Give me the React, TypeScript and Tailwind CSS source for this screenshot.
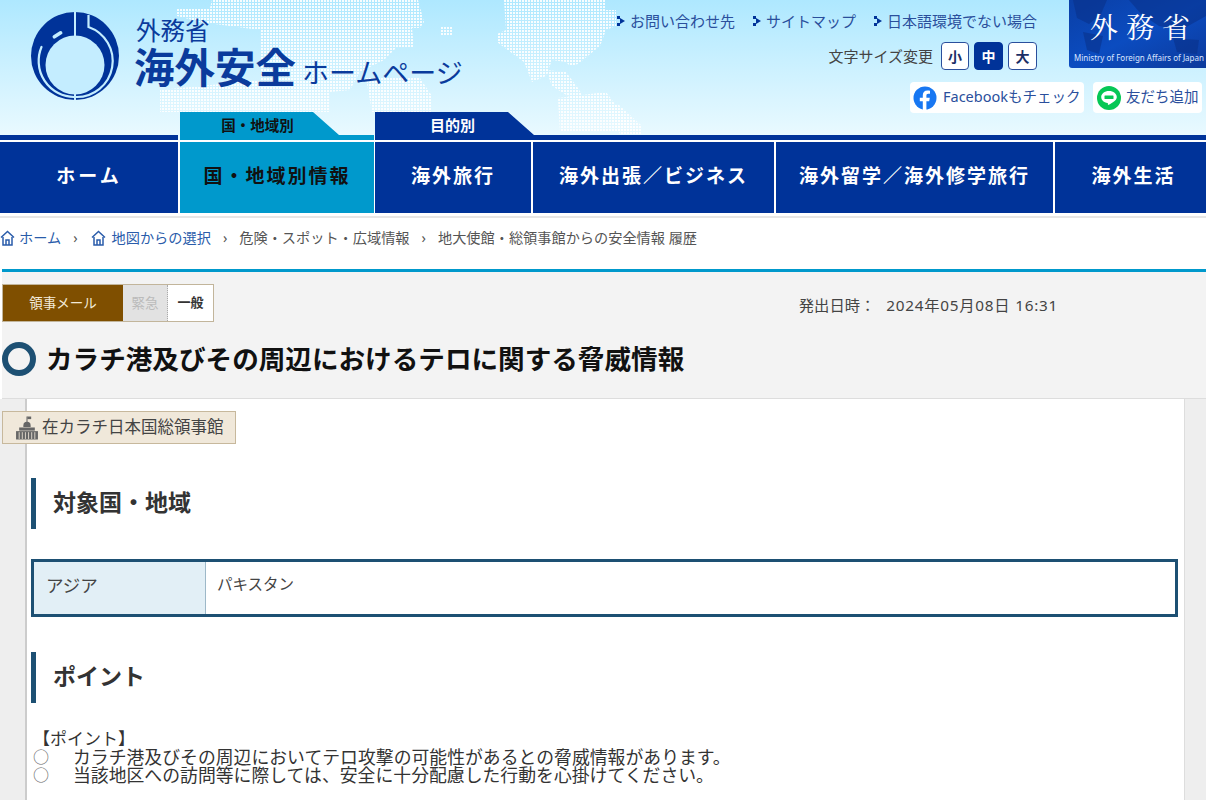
const fontStack = "font-['Noto_Sans','Noto_Sans_CJK_JP',sans-serif]";

function WorldDots() {
  return (
    <svg className="absolute left-0 top-0" width="700" height="135" aria-hidden="true">
      <defs>
        <pattern id="dots" width="3" height="3" patternUnits="userSpaceOnUse">
          <rect width="2" height="2" fill="#ffffff" fillOpacity="0.9" />
        </pattern>
      </defs>
      <g fill="url(#dots)">
        <path d="M177 8 L210 8 L212 0 L418 0 L424 22 L420 28 L412 28 L414 48 L396 48 L384 60 L360 72 L350 90 L330 92 L330 112 L160 112 L160 90 L260 80 L260 30 L200 22 L177 16 Z" />
        <path d="M366 78 L420 78 L432 96 L432 112 L372 112 Z" />
        <path d="M440 26 L452 26 L452 36 L440 36 Z" />
        <path d="M504 0 L606 0 L606 10 L616 10 L616 26 L606 30 L600 46 L578 64 L570 66 L566 62 L552 60 L546 76 L532 82 L524 62 L497 42 L497 34 L506 30 Z" />
        <path d="M546 70 L566 72 L578 88 L584 98 L574 100 L552 86 Z" />
        <path d="M558 98 L606 92 L624 116 L640 132 L560 132 Z" />
        <path d="M602 104 L618 104 L642 126 L642 134 L620 134 Z" />
      </g>
    </svg>
  );
}

function BannerMap() {
  return (
    <svg className="absolute left-0 top-0" width="137" height="68" aria-hidden="true">
      <g fill="#0a2f86" fillOpacity="0.55">
        <path d="M4 0 H38 L32 14 L20 24 L8 18 Z" />
        <path d="M60 0 H137 V16 L112 30 L90 26 L72 14 Z" />
        <path d="M14 32 L34 36 L30 54 L18 50 Z" />
        <path d="M104 38 L130 40 L128 54 L108 52 Z" />
      </g>
    </svg>
  );
}

function MofaLogo() {
  return (
    <svg width="88" height="88" viewBox="0 0 88 88" aria-label="海外安全ホームページ ロゴ">
      <circle cx="44" cy="44" r="44" fill="#003399" />
      <circle cx="44" cy="53" r="29.5" fill="#c4edff" />
      <path d="M57.5 3 V15 A36 36 0 0 1 45 85" fill="none" stroke="#c4edff" strokeWidth="2.2" />
      <path d="M10.5 35 A36 36 0 0 0 43 85" fill="none" stroke="#c4edff" strokeWidth="2.2" strokeLinecap="round" />
      <rect x="43" y="0" width="2" height="25" fill="#c4edff" />
      <rect x="43" y="80" width="2" height="8" fill="#c4edff" />
      <rect x="21" y="21" width="11" height="3.6" rx="1.8" fill="#c4edff" transform="rotate(-32 26.5 22.8)" />
    </svg>
  );
}

function Bullet() {
  return (
    <svg width="8" height="12" viewBox="0 0 8 12" className="mr-[5px] shrink-0" aria-hidden="true">
      <rect x="0" y="1" width="3" height="3" fill="#003399" />
      <rect x="0" y="8" width="3" height="3" fill="#003399" />
      <path d="M3 3 L8 6 L3 9 Z" fill="#003399" />
    </svg>
  );
}

function HomeIcon() {
  return (
    <svg width="15" height="16" viewBox="0 0 15 16" className="shrink-0" aria-hidden="true">
      <path d="M1 7.5 L7.5 1.5 L14 7.5" fill="none" stroke="#2a5caa" strokeWidth="1.5" />
      <path d="M3 7 V15 H12 V7 M6 15 V10 H9 V15" fill="none" stroke="#2a5caa" strokeWidth="1.5" />
    </svg>
  );
}

function FacebookIcon() {
  return (
    <svg width="24" height="24" viewBox="0 0 24 24" aria-hidden="true">
      <circle cx="12" cy="12" r="11.5" fill="#1877f2" />
      <path d="M13.4 24 V15.3 H16.2 L16.8 11.8 H13.4 V9.6 C13.4 8.6 13.9 7.8 15.3 7.8 H17 V4.8 C16.2 4.7 15.2 4.6 14.4 4.6 C11.6 4.6 9.8 6.3 9.8 9.2 V11.8 H6.8 V15.3 H9.8 V24 Z" fill="#ffffff" />
    </svg>
  );
}

function LineIcon() {
  return (
    <svg width="24" height="24" viewBox="0 0 24 24" aria-hidden="true">
      <circle cx="12" cy="12" r="12" fill="#06c755" />
      <path d="M12 5 C7.6 5 4.2 7.7 4.2 11.1 C4.2 14.1 6.9 16.6 10.5 17.1 C11.2 17.2 10.8 18.6 11 19 C11.4 19.3 16.6 16.2 18.4 14.3 C19.4 13.2 19.8 12.2 19.8 11.1 C19.8 7.7 16.4 5 12 5 Z" fill="#ffffff" />
      <rect x="7.5" y="9.6" width="9" height="3.4" rx="0.5" fill="#06c755" />
    </svg>
  );
}

function EmbassyIcon() {
  return (
    <svg width="22" height="24" viewBox="0 0 21 23" className="shrink-0" aria-hidden="true">
      <path d="M10.5 0.5 V7" stroke="#666" strokeWidth="1" />
      <path d="M10.8 0.5 H14.5 V3 H10.8 Z" fill="#666" />
      <path d="M7 9 A3.5 3.5 0 0 1 14 9 V10.5 H7 Z" fill="#666" />
      <path d="M3 11 H18 V14 H3 Z" fill="#666" />
      <path d="M0 14.5 H21 V22.5 H0 Z" fill="#666" />
      <path d="M3 15.5 V22 M6 15.5 V22 M9 15.5 V22 M12 15.5 V22 M15 15.5 V22 M18 15.5 V22" stroke="#f0e8da" strokeWidth="0.8" />
    </svg>
  );
}

function SectionTitle({ children }: { children: string }) {
  return (
    <h2 className="ml-[4px] flex h-[51px] items-center border-l-[5px] border-[#1d5073] pb-[3px] pl-[17px] text-[23px] font-bold text-[#333]">
      {children}
    </h2>
  );
}

const navItems = [
  { label: 'ホーム', width: 'w-[178px] tracking-[3px]', active: false },
  { label: '国・地域別情報', width: 'w-[194px]', active: true },
  { label: '海外旅行', width: 'w-[156px] -ml-[1px]', active: false },
  { label: '海外出張／ビジネス', width: 'w-[241px]', active: false },
  { label: '海外留学／海外修学旅行', width: 'w-[277px]', active: false },
  { label: '海外生活', width: 'flex-1 pl-[6px]', active: false },
];

export default function App() {
  return (
    <div className={`flex h-[800px] flex-col overflow-hidden bg-white text-[#333] ${fontStack}`}>
      {/* Header */}
      <header className="relative h-[140px] bg-gradient-to-b from-[#aee8ff] to-[#ebfaff]">
        <WorldDots />
        <div className="relative flex h-[112px] justify-between">
          <div className="flex pl-[31px] pt-[12px]">
            <MofaLogo />
            <div className="ml-[17px] text-[#0a3b9c]">
              <p className="mt-[5px] text-[24.5px] leading-[28px]">外務省</p>
              <p className="flex items-baseline whitespace-nowrap leading-[46px]">
                <span className="-ml-[2px] text-[40.5px] font-semibold">海外安全</span>
                <span className="ml-[6px] text-[27px]">ホームページ</span>
              </p>
            </div>
          </div>
          <div className="flex flex-col items-end">
            <div className="flex">
              <div className="flex flex-col items-end pt-[10px]">
                <ul className="flex gap-[18px] text-[15px] leading-[22px] text-[#2a4f9c]">
                  <li className="flex items-center"><Bullet />お問い合わせ先</li>
                  <li className="flex items-center"><Bullet />サイトマップ</li>
                  <li className="flex items-center"><Bullet />日本語環境でない場合</li>
                </ul>
                <div className="mt-[10px] flex items-center text-[15px]">
                  <span className="mr-[8px] text-[#444]">文字サイズ変更</span>
                  <div className="flex gap-[5px] text-[14px] font-bold">
                    <span className="flex h-[28px] w-[28px] items-center justify-center rounded-[4px] border border-[#2a4f9c] bg-white text-[#1a2f66]">小</span>
                    <span className="flex h-[28px] w-[29px] items-center justify-center rounded-[4px] border border-[#003399] bg-[#003399] text-white">中</span>
                    <span className="flex h-[28px] w-[29px] items-center justify-center rounded-[4px] border border-[#2a4f9c] bg-white text-[#1a2f66]">大</span>
                  </div>
                </div>
              </div>
              <div className="relative ml-[32px] h-[68px] w-[137px] overflow-hidden rounded-bl-[3px] bg-gradient-to-br from-[#0a3fa6] via-[#0b4cc0] to-[#0c3a9c] text-white">
                <BannerMap />
                <p className="relative mt-[9px] whitespace-nowrap pl-[21px] font-['Noto_Serif_CJK_JP','Liberation_Serif','Noto_Sans_CJK_JP',serif] text-[28px] leading-[34px] tracking-[8px]">外務省</p>
                <p className="relative mt-[10px] whitespace-nowrap pl-[5px] text-[8px] leading-[10px] text-[#dbe6ff]">Ministry of Foreign Affairs  of Japan</p>
              </div>
            </div>
            <div className="mt-[12px] flex gap-[9px] pr-[4px] text-[14.5px] text-[#2a4f9c]">
              <a className="flex h-[31px] w-[174px] items-center rounded-[4px] bg-white pl-[3px]">
                <FacebookIcon />
                <span className="ml-[6px] -mt-[2px] whitespace-nowrap">Facebookもチェック</span>
              </a>
              <a className="flex h-[31px] w-[109px] items-center rounded-[4px] bg-white pl-[4px]">
                <LineIcon />
                <span className="ml-[5px] -mt-[2px] whitespace-nowrap">友だち追加</span>
              </a>
            </div>
          </div>
        </div>
        {/* Tabs */}
        <div className="absolute inset-x-0 bottom-0 flex items-end">
          <div className="h-[5px] w-[178px] bg-[#003399]" />
          <div className="ml-[2px] flex h-[28px] w-[194px] items-start bg-[#0099cc] [clip-path:polygon(0_0,133px_0,159px_23px,100%_23px,100%_100%,0_100%)]">
            <span className="w-[155px] pt-[3px] text-center text-[14.5px] font-bold leading-[20px] text-[#111]">国・地域別</span>
          </div>
          <div className="ml-[1px] flex h-[28px] w-[160px] items-start bg-[#003399] [clip-path:polygon(0_0,133px_0,159px_23px,100%_23px,100%_100%,0_100%)]">
            <span className="w-[155px] pt-[3px] text-center text-[15px] font-bold leading-[20px] text-white">目的別</span>
          </div>
          <div className="h-[5px] flex-1 bg-[#003399]" />
        </div>
      </header>

      {/* Main nav */}
      <nav className="mt-[2px] flex h-[71px] gap-[2px]">
        {navItems.map((item) => (
          <a
            key={item.label}
            className={`flex items-center justify-center whitespace-nowrap pb-[2px] text-[19px] font-bold tracking-[2px] ${item.width} ${
              item.active ? 'bg-[#0099cc] text-[#111]' : 'bg-[#003399] text-white'
            }`}
          >
            {item.label}
          </a>
        ))}
      </nav>
      <div className="mt-[3px] h-[2px] bg-[#e6e6e6]" />

      {/* Breadcrumb */}
      <ol className="flex h-[51px] items-start pt-[11px] text-[14.2px] leading-[18px] text-[#555]">
        <li className="flex items-center text-[#2a5caa]"><HomeIcon /><span className="ml-[4px]">ホーム</span></li>
        <li className="ml-[12px]">›</li>
        <li className="ml-[13px] flex items-center text-[#2a5caa]"><HomeIcon /><span className="ml-[6px]">地図からの選択</span></li>
        <li className="ml-[12px]">›</li>
        <li className="ml-[12px]">危険・スポット・広域情報</li>
        <li className="ml-[12px]">›</li>
        <li className="ml-[12px]">地大使館・総領事館からの安全情報 履歴</li>
      </ol>

      {/* Title panel */}
      <section className="ml-[2px] h-[130px] border-t-[3px] border-b border-t-[#0099cc] border-b-[#dddddd] bg-[#f3f3f3]">
        <div className="mt-[12px] flex h-[38px] items-center justify-between pr-[148px]">
          <div className="flex h-[38px] border border-[#c2b59b] text-[13.5px]">
            <span className="flex w-[120px] items-center justify-center bg-[#7f4f00] text-[#f3ead8]">領事メール</span>
            <span className="flex w-[45px] items-center justify-center border-r border-dotted border-[#aaa] bg-[#e2e2e2] text-[#bbbbbb]">緊急</span>
            <span className="flex w-[45px] items-center justify-center bg-white text-[13px] font-bold text-[#333]">一般</span>
          </div>
          <p className="pt-[4px] text-[15.3px] text-[#444]">
            発出日時：<span className="ml-[11px] tracking-[0.75px]">2024年05月08日 16:31</span>
          </p>
        </div>
        <div className="mt-[19px] flex items-center">
          <span className="h-[34px] w-[34px] rounded-full border-[6px] border-[#1d5073]" />
          <h1 className="ml-[10px] whitespace-nowrap text-[26.6px] font-bold leading-[36px] text-[#111]">
            カラチ港及びその周辺におけるテロに関する脅威情報
          </h1>
        </div>
      </section>

      {/* Body */}
      <div className="flex-1 bg-[#eeeeee] pl-[25px] pr-[21px]">
        <main className="h-full border-l-2 border-r border-l-[#cccccc] border-r-[#dddddd] bg-white pt-[12px]">
          <div className="-ml-[25px] flex h-[33px] w-[234px] items-center border border-[#c7b89c] bg-[#f0e8da] pl-[13px] text-[16.5px] text-[#444]">
            <EmbassyIcon />
            <span className="ml-[4px] -mt-[1px] whitespace-nowrap">在カラチ日本国総領事館</span>
          </div>

          <div className="mt-[34px]">
            <SectionTitle>対象国・地域</SectionTitle>
          </div>

          <div className="ml-[4px] mr-[6px] mt-[30px] flex h-[58px] border-[3px] border-[#1d5073] text-[#444]">
            <div className="flex w-[172px] items-start border-r border-[#9db8c8] bg-[#e2eff6] pl-[12px] pt-[10px] text-[17.5px]">アジア</div>
            <div className="flex-1 pl-[11px] pt-[11px] text-[15.5px]">パキスタン</div>
          </div>

          <div className="mt-[35px]">
            <SectionTitle>ポイント</SectionTitle>
          </div>

          <div className="ml-[6px] mt-[27px] text-[17.85px] leading-[18px] text-[#333]">
            <p className="text-[17px]">【ポイント】</p>
            <p className="flex"><span className="w-[40px] shrink-0 text-[16px] text-[#666]">○</span>カラチ港及びその周辺においてテロ攻撃の可能性があるとの脅威情報があります。</p>
            <p className="flex"><span className="w-[40px] shrink-0 text-[16px] text-[#666]">○</span>当該地区への訪問等に際しては、安全に十分配慮した行動を心掛けてください。</p>
          </div>
        </main>
      </div>
    </div>
  );
}
